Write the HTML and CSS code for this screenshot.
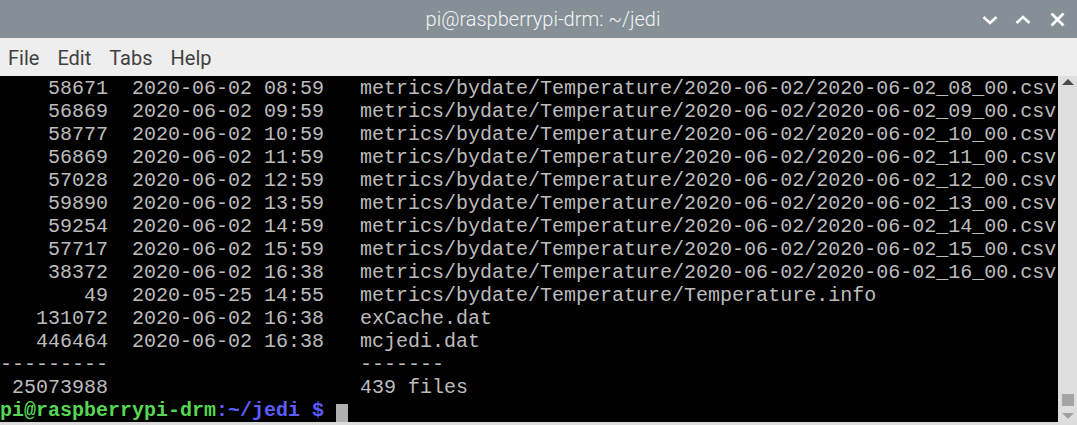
FILE: index.html
```html
<!DOCTYPE html>
<html>
<head>
<meta charset="utf-8">
<link rel="stylesheet" href="styles.css">
</head>
<body>
<div class="window">
  <div class="titlebar">
    <div class="title">pi@raspberrypi-drm: ~/jedi</div>
    <div class="controls">
      <svg class="ctl ctl-min" width="16" height="10" viewBox="0 0 16 10"><path d="M1.5 2 L8 8 L14.5 2" fill="none" stroke="#fff" stroke-width="2.6"/></svg>
      <svg class="ctl ctl-max" width="16" height="10" viewBox="0 0 16 10"><path d="M1.5 8 L8 2 L14.5 8" fill="none" stroke="#fff" stroke-width="2.6"/></svg>
      <svg class="ctl ctl-close" width="15" height="15" viewBox="0 0 15 15"><path d="M1.5 1.5 L13.5 13.5 M13.5 1.5 L1.5 13.5" fill="none" stroke="#fff" stroke-width="2.8"/></svg>
    </div>
  </div>
  <div class="menubar">
    <span class="menu">File</span>
    <span class="menu">Edit</span>
    <span class="menu">Tabs</span>
    <span class="menu">Help</span>
  </div>
  <div class="termwrap">
    <pre class="term">    58671  2020-06-02 08:59   metrics/bydate/Temperature/2020-06-02/2020-06-02_08_00.csv
    56869  2020-06-02 09:59   metrics/bydate/Temperature/2020-06-02/2020-06-02_09_00.csv
    58777  2020-06-02 10:59   metrics/bydate/Temperature/2020-06-02/2020-06-02_10_00.csv
    56869  2020-06-02 11:59   metrics/bydate/Temperature/2020-06-02/2020-06-02_11_00.csv
    57028  2020-06-02 12:59   metrics/bydate/Temperature/2020-06-02/2020-06-02_12_00.csv
    59890  2020-06-02 13:59   metrics/bydate/Temperature/2020-06-02/2020-06-02_13_00.csv
    59254  2020-06-02 14:59   metrics/bydate/Temperature/2020-06-02/2020-06-02_14_00.csv
    57717  2020-06-02 15:59   metrics/bydate/Temperature/2020-06-02/2020-06-02_15_00.csv
    38372  2020-06-02 16:38   metrics/bydate/Temperature/2020-06-02/2020-06-02_16_00.csv
       49  2020-05-25 14:55   metrics/bydate/Temperature/Temperature.info
   131072  2020-06-02 16:38   exCache.dat
   446464  2020-06-02 16:38   mcjedi.dat
---------                     -------
 25073988                     439 files
<span class="pg">pi@raspberrypi-drm</span><span class="pb">:~/jedi $</span> <span class="cursor"> </span></pre>
    <div class="scrollbar">
      <div class="arrow-up"></div>
      <div class="track"></div>
      <div class="thumb"></div>
      <div class="arrow-down"></div>
    </div>
  </div>
</div>
</body>
</html>
```

FILE: styles.css
```css
html, body {
  margin: 0;
  padding: 0;
  background: #000;
}
.window {
  width: 1077px;
  height: 425px;
  display: flex;
  flex-direction: column;
  overflow: hidden;
  background: #e0e0e0;
}
.titlebar {
  height: 38px;
  flex: 0 0 38px;
  background: #848f96;
  position: relative;
  display: flex;
  align-items: center;
  justify-content: center;
}
.title {
  font-family: Roboto, "Liberation Sans", sans-serif;
  font-weight: 300;
  font-size: 20px;
  color: #f4f4f4;
  margin-left: 9px;
}
.controls {
  position: absolute;
  right: 0;
  top: 0;
  height: 38px;
  display: flex;
  align-items: center;
}
.ctl { display: block; }
.ctl-min { margin-right: 17px; margin-top: 2px; }
.ctl-max { margin-right: 19px; margin-top: 1px; }
.ctl-close { margin-right: 12px; }
.menubar {
  height: 38px;
  flex: 0 0 38px;
  background: #eeeeee;
  display: flex;
  align-items: center;
  padding-left: 8px;
  padding-top: 1px;
  box-sizing: border-box;
  gap: 18px;
  font-family: Roboto, "Liberation Sans", sans-serif;
  font-size: 20px;
  color: #404040;
}
.termwrap {
  flex: 1;
  display: flex;
  background: #000;
  border-bottom: 3px solid #dcdcdc;
  min-height: 0;
}
.term {
  flex: 1;
  margin: 0;
  padding: 1px 0 0 0;
  font-family: "Liberation Mono", monospace;
  font-size: 20px;
  line-height: 23px;
  color: #bcbcbc;
  white-space: pre;
  overflow: hidden;
}
.pg { color: #55d655; font-weight: bold; }
.pb { color: #5c5cff; font-weight: bold; }
.cursor {
  display: inline-block;
  width: 12px;
  height: 22px;
  background: #b0b0b0;
  vertical-align: -5px;
}
.scrollbar {
  width: 19px;
  flex: 0 0 19px;
  background: #dedede;
  position: relative;
  display: flex;
  flex-direction: column;
  align-items: center;
}
.arrow-up {
  margin-top: 3px;
  width: 0;
  height: 0;
  border-left: 6px solid transparent;
  border-right: 6px solid transparent;
  border-bottom: 6px solid #4a4a4a;
}
.track { flex: 1; }
.thumb {
  width: 12px;
  height: 12px;
  background: #a4a4a4;
  margin-bottom: 7px;
}
.arrow-down {
  width: 0;
  height: 0;
  border-left: 6px solid transparent;
  border-right: 6px solid transparent;
  border-top: 6px solid #a0a0a0;
  margin-bottom: 3px;
}
```
